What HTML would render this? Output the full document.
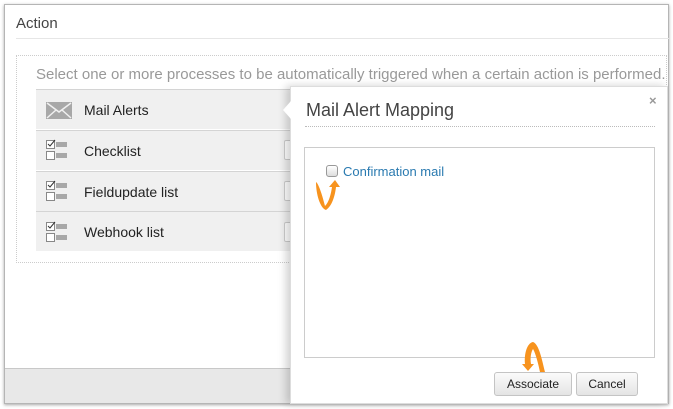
<!DOCTYPE html>
<html><head><style>
*{margin:0;padding:0;box-sizing:border-box}
body{width:673px;height:409px;background:#fff;font-family:"Liberation Sans",Arial,sans-serif;position:relative;overflow:hidden}
.win{position:absolute;left:4px;top:4px;width:665px;height:400px;border:1px solid #b5b5b5;background:#fff;box-shadow:0 1px 3px rgba(0,0,0,.35)}
.abs{position:absolute}
.row{position:absolute;left:36px;width:260px;height:40px;background:#f0f0f0;border-top:1px solid #d4d4d4;font-size:14px;color:#222;line-height:40px;padding-left:48px}
.btn{position:absolute;height:24px;border:1px solid #c4c4c4;border-radius:3px;background:linear-gradient(#fbfbfb,#e4e4e4);font-size:12px;color:#222;text-align:center;line-height:22px}
.cl{position:absolute;left:10px}
</style></head><body>
<div class="win"></div>
<div class="abs" style="left:16px;top:15px;font-size:15px;color:#444">Action</div>
<div class="abs" style="left:16px;top:38px;width:653px;border-top:1px solid #e6e6e6"></div>
<div class="abs" style="left:16px;top:55px;width:651px;height:208px;border:1px dotted #ccc"></div>
<div class="abs" style="left:36px;top:66px;font-size:15px;color:#999;white-space:nowrap">Select one or more processes to be automatically triggered when a certain action is performed.</div>
<div class="row" style="top:89px">Mail Alerts
<svg class="cl" style="top:12px" width="26" height="17" viewBox="0 0 26 17"><rect width="26" height="17" fill="#a8a8a8"/><path d="M1 1L13 10L25 1M1 16L10 8M25 16L16 8" stroke="#f0f0f0" stroke-width="1.5" fill="none"/></svg></div>
<div class="row" style="top:130px">Checklist</div>
<div class="row" style="top:171px">Fieldupdate list</div>
<div class="row" style="top:211px;height:40px">Webhook list</div>
<svg class="abs" style="left:46px;top:139px" width="26" height="104">
<g id="c"><rect x="0.5" y="1.5" width="8" height="8" fill="#fff" stroke="#888"/><path d="M2 5L4 7L9 1" stroke="#333" fill="none"/><rect x="10" y="3" width="11" height="5" fill="#a8a8a8"/><rect x="0.5" y="12.5" width="8" height="8" fill="#fff" stroke="#888"/><rect x="10" y="14" width="11" height="5" fill="#a8a8a8"/></g>
<use href="#c" y="41"/><use href="#c" y="82"/></svg>
<div class="abs" style="left:284px;top:140px;width:10px;height:20px;border:1px solid #ccc;border-radius:2px;background:#fff"></div>
<div class="abs" style="left:284px;top:181px;width:10px;height:20px;border:1px solid #ccc;border-radius:2px;background:#fff"></div>
<div class="abs" style="left:284px;top:222px;width:10px;height:20px;border:1px solid #ccc;border-radius:2px;background:#fff"></div>
<div class="abs" style="left:5px;top:368px;width:290px;height:35px;background:#e8e8e8;border-top:1px solid #c8c8c8"></div>
<div class="abs" style="left:290px;top:86px;width:378px;height:318px;background:#fff;border:1px solid #ddd;box-shadow:-4px 0 8px rgba(0,0,0,.18)"></div>
<svg class="abs" style="left:282px;top:101px" width="10" height="18"><path d="M9 0L1 9L9 18Z" fill="#fff"/></svg>
<div class="abs" style="left:306px;top:100px;font-size:18px;color:#444">Mail Alert Mapping</div>
<div class="abs" style="left:649px;top:93px;font-size:13px;color:#999;font-weight:bold">×</div>
<div class="abs" style="left:305px;top:126px;width:350px;border-top:1px dotted #bbb"></div>
<div class="abs" style="left:304px;top:147px;width:351px;height:211px;border:1px solid #ccc"></div>
<div class="abs" style="left:326px;top:165px;width:12px;height:12px;border:1px solid #999;border-radius:3px;background:linear-gradient(#fff,#ddd)"></div>
<div class="abs" style="left:343px;top:164px;font-size:13px;color:#2a7ab0">Confirmation mail</div>
<svg class="abs" style="left:314px;top:176px" width="26" height="36"><path d="M2 6C5 8 9 22 11 30C15 26 17 18 18 11L15 11L21 4L26 11L22 11C21 20 18 30 12 34C6 32 2 18 2 6Z" fill="#f7931e"/></svg>
<svg class="abs" style="left:518px;top:340px" width="28" height="36"><path d="M15 2C21 4 24 20 27 32L22 32C20 22 17 12 15 9C13 12 12 18 13 24L16 24L10 31L4 24L7 24C6 14 9 3 15 2Z" fill="#f7931e"/></svg>
<div class="btn" style="left:494px;top:372px;width:78px">Associate</div>
<div class="btn" style="left:576px;top:372px;width:62px">Cancel</div>
</body></html>
